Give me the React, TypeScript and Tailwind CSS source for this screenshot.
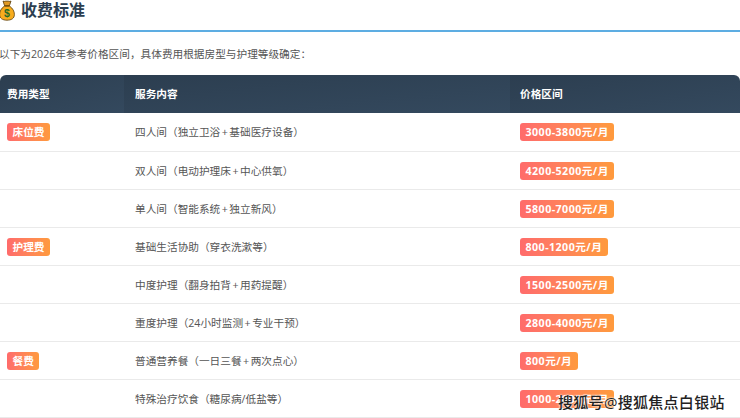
import React from 'react';

type Row = {
    tag?: string;
    service: string;
    price: string;
};

const rows: Row[] = [
    { tag: '床位费', service: '四人间（独立卫浴+基础医疗设备）', price: '3000-3800元/月' },
    { service: '双人间（电动护理床+中心供氧）', price: '4200-5200元/月' },
    { service: '单人间（智能系统+独立新风）', price: '5800-7000元/月' },
    { tag: '护理费', service: '基础生活协助（穿衣洗漱等）', price: '800-1200元/月' },
    { service: '中度护理（翻身拍背+用药提醒）', price: '1500-2500元/月' },
    { service: '重度护理（24小时监测+专业干预）', price: '2800-4000元/月' },
    { tag: '餐费', service: '普通营养餐（一日三餐+两次点心）', price: '800元/月' },
    { service: '特殊治疗饮食（糖尿病/低盐等）', price: '1000-2000元/月' },
];

const Badge = ({ text, price }: { text: string; price?: boolean }) => (
    <span
        className={`inline-block h-[18px] rounded-[3px] bg-gradient-to-r from-[#ff6b6b] to-[#ff9a3c] px-[5.5px] align-middle text-[10.67px] leading-[18px] font-bold text-white ${
            price ? 'tracking-[0.45px]' : ''
        }`}
    >
        {text}
    </span>
);

// the plus sign is wider in the reference font
const Service = ({ text }: { text: string }) => {
    const parts = text.split('+');
    if (parts.length < 2) return <>{text}</>;
    return (
        <>
            {parts[0]}
            <span className="mx-[1.5px]">+</span>
            {parts[1]}
        </>
    );
};

const MoneyBag = () => (
    <svg width="16" height="21" viewBox="0 0 16 21" className="-ml-[1px] shrink-0">
        <path d="M4 1 C5.5 2.2 6.5 0.6 8 1.2 C9.5 0.6 10.5 2.2 12 1 L10.5 5.5 L5.5 5.5 Z" fill="#e09a26" stroke="#5a3d0a" strokeWidth="0.8" />
        <path d="M5.5 6 C2 8.5 0.6 11.5 0.6 14.5 C0.6 18.4 3.6 20.2 8 20.2 C12.4 20.2 15.4 18.4 15.4 14.5 C15.4 11.5 14 8.5 10.5 6 Z" fill="#f7ac1e" stroke="#5a3d0a" strokeWidth="0.8" />
        <rect x="5" y="4.9" width="6" height="1.6" rx="0.8" fill="#7a5210" />
        <text x="8" y="17.2" textAnchor="middle" fontSize="10.5" fontWeight="700" fill="#1f6b2b" fontFamily="'Liberation Sans', sans-serif">$</text>
    </svg>
);

export default function App() {
    return (
        <div className="relative h-[418px] w-[740px] overflow-hidden bg-white font-['Open_Sans','Noto_Sans_CJK_SC',sans-serif] text-[#333]">
            <div className="flex h-[32px] items-start gap-[6px] border-b-2 border-[#5dade2]">
                <MoneyBag />
                <h2 className="text-[16px] leading-[21px] font-bold text-[#2c3e50]">收费标准</h2>
            </div>

            <p className="mt-[14px] -ml-[1px] h-[16px] text-[10.67px] leading-[16px] text-[#555]">
                以下为2026年参考价格区间，具体费用根据房型与护理等级确定：
            </p>

            <table className="mt-[13px] w-[740px] table-fixed border-collapse">
                <thead>
                    <tr className="h-[38px] text-left text-[10.67px] font-bold text-white">
                        <th className="w-[124px] rounded-tl-[6px] bg-gradient-to-br from-[#2c3e50] to-[#34495e] pl-[7px]">费用类型</th>
                        <th className="w-[386px] bg-gradient-to-br from-[#2c3e50] to-[#34495e] pl-[11px]">服务内容</th>
                        <th className="rounded-tr-[6px] bg-gradient-to-br from-[#2c3e50] to-[#34495e] pl-[10px]">价格区间</th>
                    </tr>
                </thead>
                <tbody>
                    {rows.map((row) => (
                        <tr key={row.service} className="h-[38px] border-b border-[#eaeaea] text-[10.67px] text-[#555]">
                            <td className="pt-[1px] pl-[7px]">{row.tag && <Badge text={row.tag} />}</td>
                            <td className="pt-[1px] pl-[11px]"><Service text={row.service} /></td>
                            <td className="pt-[1px] pl-[10px]"><Badge text={row.price} price /></td>
                        </tr>
                    ))}
                </tbody>
            </table>

            {/* watermark sits over the last row */}
            <div className="absolute top-[392px] left-[558px] text-[15px] leading-[20px] font-medium tracking-[0.3px] whitespace-nowrap text-[#222] [text-shadow:0_0_2px_#fff,0_0_2px_#fff]">
                搜狐号@搜狐焦点白银站
            </div>
        </div>
    );
}
